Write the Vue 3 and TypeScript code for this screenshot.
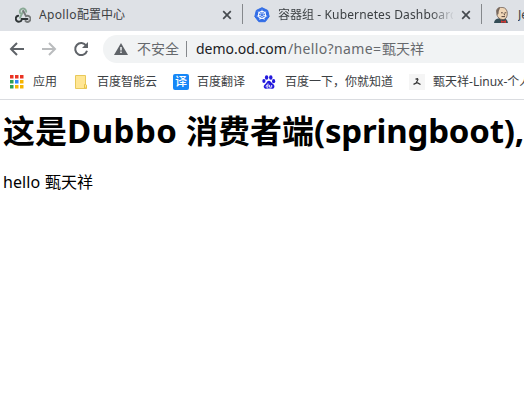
<script setup lang="ts">
const title = '这是'
const siteName = '甄天祥'
const appDots: string[] = ['#ea3323', '#ea3323', '#ea3323', '#2e9e55', '#2b86f5', '#f5b400', '#2e9e55', '#f5b400', '#f5b400']
const spokes: number[] = [0, 51.4, 102.9, 154.3, 205.7, 257.1, 308.6]
</script>

<template>
  <div class="browser">
    <header class="tabs">
      <div class="tab first">
        <svg class="icon" viewBox="0 0 16 16" fill="none" stroke-width="1.9" stroke-linecap="round">
          <path d="M5.2 6.3A3.2 3.2 0 1 1 11.2 4.8M8.2 4 5 10.8" stroke="#8aaa96" />
          <path d="M8.3 4 11 9.2A3 3 0 1 1 10.5 14" stroke="#777a7b" />
          <path d="M3.2 8.8A3 3 0 1 0 6.8 12H12.5" stroke="#303638" />
        </svg>
        <span class="label"><span class="apollo">Apollo</span>配置中心</span>
        <svg class="close" viewBox="0 0 10 10"><path d="m1.2 1.2 7.6 7.6m0-7.6L1.2 8.8" /></svg>
      </div>
      <i class="separator"></i>
      <div class="tab second">
        <svg class="icon" viewBox="0 0 16 16">
          <path d="m8 .7 5.7 2.7 1.5 6.2-4 5.1H4.8l-4-5.1 1.5-6.2z" fill="#326de6" stroke="#326de6" stroke-linejoin="round" />
          <g fill="none" stroke="#fff">
            <circle cx="8" cy="8" r="3.5" stroke-width="1.1" />
            <path v-for="angle in spokes" :key="angle" d="M8 7V2.7" stroke-width=".75" :transform="`rotate(${angle} 8 8)`" />
          </g>
        </svg>
        <span class="label fade">容器组<span class="kube"> - Kubernetes Dashboard</span></span>
        <svg class="close" viewBox="0 0 10 10"><path d="m1.2 1.2 7.6 7.6m0-7.6L1.2 8.8" /></svg>
      </div>
      <i class="separator"></i>
      <div class="tab third">
        <svg class="icon" viewBox="0 0 16 16">
          <path d="M0 16c.4-3 2-4 4-4.5l5-.5c3 .5 4.5 2 5 5z" fill="#344c55" />
          <path d="M2.6 3.2C3.6.7 5.6.2 8.1.4c3.4.1 5.3 2.7 5.2 6.1-.1 4-1.7 5.8-4.2 6.1C5.4 12.6 3.6 10 2.9 8z" fill="#f0d6b7" stroke="#5b4b43" stroke-width=".7" />
          <path d="M2.6 4C3.1 1.5 4.6.5 6.2.5L4.8 4l-.4 3-1.1 1z" fill="#75665c" />
          <path d="M7 5.8h1.8m1.8 0h1.6M10 6.3l.6 2M7.5 9.6h3.5" fill="none" stroke="#49362f" stroke-width=".9" />
          <path d="m7 13.3 2 .9 3-.9V16l-3-.8-2 .8z" fill="#d33833" />
        </svg>
        <span class="label">Je</span>
      </div>
    </header>

    <nav class="toolbar">
      <svg class="nav" viewBox="0 0 16 16"><path d="M15 8H2m6-6L2 8l6 6" stroke="#5f6368" /></svg>
      <svg class="nav" viewBox="0 0 16 16"><path d="M1 8h13M8 2l6 6-6 6" stroke="#babcbe" /></svg>
      <svg class="nav" viewBox="0 0 16 16"><path d="M13.2 4.7A6 6 0 1 0 14 9.7" stroke="#5f6368" /><path d="M15 1v6H9z" fill="#5f6368" /></svg>
      <div class="address">
        <svg class="warning" viewBox="0 0 14 12"><path d="M7 0 14 12H0z" fill="#5f6368" /><path d="M7 4v3.5m0 1v1.6" stroke="#f1f3f4" stroke-width="1.5" /></svg>
        <span class="unsafe">不安全</span><i class="address-line"></i>
        <span class="host">demo.od.com</span><span class="path">/hello?name=</span><span class="query">{{ siteName }}</span>
      </div>
    </nav>

    <nav class="bookmarks">
      <a class="bookmark apps">
        <svg class="icon" viewBox="0 0 16 16"><rect v-for="(color, index) in appDots" :key="index" :x="2 + index % 3 * 5" :y="1 + Math.floor(index / 3) * 5" width="3.5" height="3.5" :fill="color" /></svg>
        <span>应用</span>
      </a>
      <a class="bookmark cloud">
        <svg class="icon" viewBox="0 0 16 16"><path d="M2.5 1.5h10v9l1 .5v3.5h-11z" fill="#ffe694" stroke="#e8c95a" /><path d="M11.5 14v-3.5h1l1 1V14z" fill="#ffe694" stroke="#e8c348" /></svg>
        <span>百度智能云</span>
      </a>
      <a class="bookmark translate"><span class="translate-icon">译</span><span>百度翻译</span></a>
      <a class="bookmark baidu">
        <svg class="icon" viewBox="0 0 16 16" fill="#2319dc">
          <ellipse cx="5.6" cy="3.5" rx="1.7" ry="2.3" /><ellipse cx="9.8" cy="3.5" rx="1.7" ry="2.3" />
          <ellipse cx="2.9" cy="7" rx="1.6" ry="2.1" /><ellipse cx="12.6" cy="7.2" rx="1.6" ry="2.1" />
          <path d="M8 6.8c1.5 0 2.2 1.5 3.2 2.5 1.8 1.6 2.8 2.6 2 4.1-.8 1.9-3 1.1-5.2 1.1s-4.2.8-5.1-1c-.7-1.7.4-2.7 2-4.1C6 8.2 6.4 6.8 8 6.8z" />
          <path d="M7 9.5v3.7H5.6q-1-.9 0-2H7m1.6-.3v2.3h2.1V11" fill="none" stroke="#fff" stroke-width=".9" />
        </svg>
        <span>百度一下，你就知道</span>
      </a>
      <a class="bookmark personal">
        <svg class="icon" viewBox="0 0 16 16"><path fill="#f5f5f5" d="M0 0h16v16H0z" /><path d="m6.5 5.2 2-.4.4 1-1.6 2.7M4.5 10.4l3-1.5h1.2l2.8 1.6" fill="none" stroke="#333" stroke-width="1.2" /></svg>
        <span>甄天祥-<span class="linux">Linux</span>-个人</span>
      </a>
    </nav>
    <main>
      <h1><span>{{ title }}</span><span class="dubbo">Dubbo</span><span class="consumer">消费者端</span><span class="spring">(springboot),</span></h1>
      <p><span class="hello">hello</span>{{ siteName }}</p>
    </main>
  </div>
</template>

<style>
body { background: #fff; overflow: hidden; }
</style>

<style scoped>
.browser { width: 524px; height: 402px; overflow: hidden; background: #fff; color: #000; font-family: "Noto Sans", "Noto Sans CJK SC", sans-serif; white-space: nowrap; }
svg { display: block; flex: none; }
i { display: block; flex: none; }
.tabs { height: 31px; box-sizing: border-box; display: flex; background: #dee1e6; color: #3c4043; font-size: 12px; line-height: 18px; }
.tab { display: flex; align-items: center; box-sizing: border-box; height: 30px; flex: none; }
.first { width: 242px; padding-left: 15px; }
.second { width: 238px; padding-left: 11px; }
.third { padding-left: 12px; }
.icon { width: 16px; height: 16px; }
.label { width: 178px; margin-left: 8px; overflow: hidden; flex: none; }
.apollo { letter-spacing: .35px; }
.close { width: 10px; height: 10px; margin-left: 5px; fill: none; stroke: #454a4f; stroke-width: 1.7; }
.second .label { width: 175px; }
.second .close { margin-left: 8px; }
.fade { mask-image: linear-gradient(90deg, #000 152px, transparent 177px); }
.kube { letter-spacing: .14px; }
.separator { width: 1px; height: 20px; margin-top: 4px; background: #85888c; }
.toolbar { height: 36px; display: flex; align-items: center; padding-left: 9px; box-sizing: border-box; gap: 16px; }
.nav { width: 16px; height: 16px; fill: none; stroke-width: 2; }
.address { height: 28px; width: 440px; flex: none; margin-left: -2px; border-radius: 14px 0 0 14px; background: #f1f3f4; display: flex; align-items: center; font-size: 14px; line-height: 24px; color: #66696d; }
.warning { width: 14px; height: 12px; margin: 0 9px 0 11px; }
.unsafe { width: 42px; }
.address-line { width: 1px; height: 16px; margin: 0 9px 0 7px; background: #85888c; }
.host { width: 92px; color: #202124; }
.path { width: 94px; letter-spacing: .36px; }
.bookmarks { height: 33px; box-sizing: border-box; border-bottom: 1px solid #dadce0; display: flex; align-items: center; padding: 0 0 3px 8px; font-size: 12px; line-height: 18px; color: #3c4043; }
.bookmark { display: flex; align-items: center; gap: 8px; flex: none; }
.apps { width: 65px; gap: 9px; }
.cloud { width: 100px; }
.translate { width: 88px; }
.baidu { width: 148px; }
.translate-icon { width: 16px; height: 16px; border-radius: 2px; background: #1687f7; color: #fff; text-align: center; line-height: 15px; font-size: 12px; font-weight: 500; }
main { padding: 13px 0 0 3px; }
h1 { display: flex; align-items: baseline; margin: 0; font-size: 32px; line-height: 36px; font-weight: 700; }
h1 span { flex: none; }
.dubbo { width: 119px; font-size: 33px; letter-spacing: .5px; }
.consumer { width: 128px; }
.spring { font-size: 33px; letter-spacing: -.2px; }
p { display: flex; margin: 21px 0 0; font-size: 16px; line-height: 24px; }
.hello { width: 42px; letter-spacing: .1px; }
</style>
